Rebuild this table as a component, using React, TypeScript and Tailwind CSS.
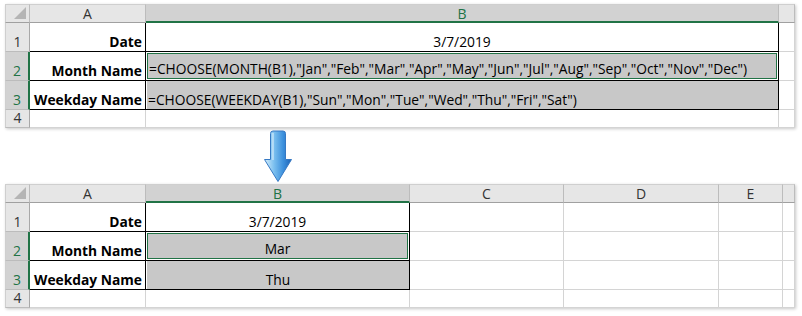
import React from "react";

const FONT = "font-['Open_Sans',sans-serif]";

type CellProps = { className?: string; children?: React.ReactNode };

const C = ({ className = "", children }: CellProps) => (
  <div className={`box-border min-w-0 overflow-visible whitespace-nowrap ${className}`}>{children}</div>
);

// column header cells
const HDR =
  "bg-[#e6e6e6] border-t border-r border-b border-t-[#cfcfcf] border-r-[#bcbcbc] border-b-[#a0a0a0] flex items-center justify-center text-[14px] text-[#333]";
const HDR_SEL =
  "bg-[#d2d2d2] border-t border-r border-b-2 border-t-[#cfcfcf] border-r-[#bcbcbc] border-b-[#217346] flex items-center justify-center text-[14px] text-[#217346]";
// row header cells
const RH =
  "bg-[#e6e6e6] border-l border-r border-b border-l-[#cfcfcf] border-r-[#a8a8a8] border-b-[#bcbcbc] flex items-end justify-center pb-[1px] leading-[16px] text-[14px] text-[#333]";
const RH_SEL =
  "bg-[#d2d2d2] border-l border-r-2 border-b border-l-[#cfcfcf] border-r-[#217346] border-b-[#bcbcbc] flex items-end justify-center pb-[1px] leading-[16px] text-[14px] text-[#217346]";
// plain gridline cell
const GRID = "bg-white border-r border-b border-[#d4d4d4]";
// black-bordered data cells
const BOX = "bg-white border-r border-b border-black flex items-end pb-[1px] leading-[16px] text-[13.8px] text-black";

const Corner = () => (
  <C className="bg-[#e6e6e6] border-t border-l border-r border-b border-t-[#cfcfcf] border-l-[#cfcfcf] border-r-[#bcbcbc] border-b-[#a0a0a0] relative">
    <svg className="absolute right-[3px] bottom-[3px]" width="12" height="12" viewBox="0 0 12 12">
      <polygon points="12,0 12,12 0,12" fill="#b5b5b5" />
    </svg>
  </C>
);

const Label = ({ text }: { text: string }) => (
  <C className={`${BOX} justify-end pr-[3px] font-bold text-[13.4px]`}>{text}</C>
);

// shaded cell; "active" adds the green cursor frame
const Shaded = ({ children, active, center }: { children: React.ReactNode; active?: boolean; center?: boolean }) => (
  <C className="bg-white border-r border-b border-black flex">
    <div
      className={`flex-1 ml-[1px] bg-[#c8c8c8] flex items-end pb-[1px] leading-[16px] text-[13.8px] text-black ${
        center ? "justify-center" : "justify-start pl-[1px]"
      } ${active ? "border border-[#217346] mt-[1px] mr-[1px] mb-[1px] pb-0" : ""}`}
    >
      {children}
    </div>
  </C>
);

const TopSheet = () => (
  <div className="grid grid-cols-[25px_116px_633px_16px] grid-rows-[19px_29px_29px_29px_18px] w-[790px] shadow-[1px_1px_3px_rgba(0,0,0,0.22)]">
    <Corner />
    <C className={HDR}>A</C>
    <C className={HDR_SEL}>B</C>
    <C className={HDR} />

    <C className={RH}>1</C>
    <Label text="Date" />
    <C className={`${BOX} justify-center`}>3/7/2019</C>
    <C className={GRID} />

    <C className={RH_SEL}>2</C>
    <Label text="Month Name" />
    <Shaded active>
      =CHOOSE(MONTH(B1),"Jan","Feb","Mar","Apr","May","Jun","Jul","Aug","Sep","Oct","Nov","Dec")
    </Shaded>
    <C className={GRID} />

    <C className={RH_SEL}>3</C>
    <Label text="Weekday Name" />
    <Shaded>=CHOOSE(WEEKDAY(B1),"Sun","Mon","Tue","Wed","Thu","Fri","Sat")</Shaded>
    <C className={GRID} />

    <C className={RH}>4</C>
    <C className={GRID} />
    <C className={GRID} />
    <C className={GRID} />
  </div>
);

const BottomSheet = () => (
  <div className="grid grid-cols-[25px_116px_264px_154px_155px_64px_12px] grid-rows-[19px_29px_29px_29px_18px] w-[790px] shadow-[1px_1px_3px_rgba(0,0,0,0.22)]">
    <Corner />
    <C className={HDR}>A</C>
    <C className={HDR_SEL}>B</C>
    <C className={HDR}>C</C>
    <C className={HDR}>D</C>
    <C className={HDR}>E</C>
    <C className={HDR} />

    <C className={RH}>1</C>
    <Label text="Date" />
    <C className={`${BOX} justify-center`}>3/7/2019</C>
    <C className={GRID} />
    <C className={GRID} />
    <C className={GRID} />
    <C className={GRID} />

    <C className={RH_SEL}>2</C>
    <Label text="Month Name" />
    <Shaded active center>
      Mar
    </Shaded>
    <C className={GRID} />
    <C className={GRID} />
    <C className={GRID} />
    <C className={GRID} />

    <C className={RH_SEL}>3</C>
    <Label text="Weekday Name" />
    <Shaded center>Thu</Shaded>
    <C className={GRID} />
    <C className={GRID} />
    <C className={GRID} />
    <C className={GRID} />

    <C className={RH}>4</C>
    <C className={GRID} />
    <C className={GRID} />
    <C className={GRID} />
    <C className={GRID} />
    <C className={GRID} />
    <C className={GRID} />
  </div>
);

const DownArrow = () => (
  <svg width="30" height="53" viewBox="0 0 30 53">
    <defs>
      <linearGradient id="arrowFill" x1="0" y1="0" x2="1" y2="0">
        <stop offset="0" stopColor="#d6eefc" />
        <stop offset="0.35" stopColor="#7cc0ef" />
        <stop offset="0.7" stopColor="#3b8fdc" />
        <stop offset="1" stopColor="#1d62b4" />
      </linearGradient>
    </defs>
    <path
      d="M7.5 3.5 Q7.5 1 10 1 L20 1 Q22.5 1 22.5 3.5 L22.5 29.5 L28.5 29.5 L15 51.5 L1.5 29.5 L7.5 29.5 Z"
      fill="url(#arrowFill)"
      stroke="#3679c4"
      strokeWidth="1"
      strokeLinejoin="round"
    />
    <path d="M10 3 L10 30" stroke="#ffffff" strokeOpacity="0.5" strokeWidth="1.5" />
  </svg>
);

export default function App() {
  return (
    <div className={`w-[802px] h-[316px] bg-white pt-[4px] pl-[5px] ${FONT}`}>
      <TopSheet />
      <div className="h-[56px] flex items-center pl-[258px]">
        <DownArrow />
      </div>
      <BottomSheet />
    </div>
  );
}
